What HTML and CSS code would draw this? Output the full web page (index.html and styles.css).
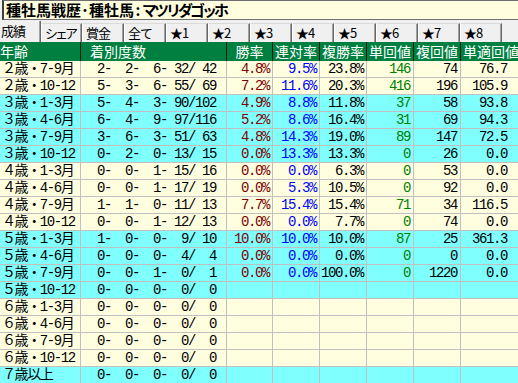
FILE: index.html
```html
<!DOCTYPE html>
<html lang="ja">
<head>
<meta charset="utf-8">
<link rel="stylesheet" href="styles.css">
</head>
<body>
<div class="title">種牡馬戦歴<span class="dot">･</span>種牡馬<span class="dot">:</span><span class="kana">マツリダゴッホ</span></div>
<div class="tabs">
  <span class="tab active w41">成績</span>
  <span class="tab w41 narrow">シェア</span>
  <span class="tab">賞金</span>
  <span class="tab">全て</span>
  <span class="tab">★1</span>
  <span class="tab">★2</span>
  <span class="tab">★3</span>
  <span class="tab">★4</span>
  <span class="tab">★5</span>
  <span class="tab">★6</span>
  <span class="tab">★7</span>
  <span class="tab">★8</span>
</div>
<div class="grid">
  <div class="row head">
    <div class="h left">年齢</div><div class="h deg">着別度数</div><div class="h">勝率</div><div class="h">連対率</div><div class="h">複勝率</div><div class="h">単回値</div><div class="h">複回値</div><div class="h last">単適回値</div>
  </div>
  <div class="row y"><div class="c lab">２歳・7-9月</div><div class="c deg">2-  2-  6- 32/ 42</div><div class="c r1">4.8%</div><div class="c r2">9.5%</div><div class="c">23.8%</div><div class="c g">146</div><div class="c">74</div><div class="c last">76.7</div></div>
  <div class="row y"><div class="c lab">２歳・10-12</div><div class="c deg">5-  3-  6- 55/ 69</div><div class="c r1">7.2%</div><div class="c r2">11.6%</div><div class="c">20.3%</div><div class="c g">416</div><div class="c">196</div><div class="c last">105.9</div></div>
  <div class="row cy"><div class="c lab">３歳・1-3月</div><div class="c deg">5-  4-  3- 90/102</div><div class="c r1">4.9%</div><div class="c r2">8.8%</div><div class="c">11.8%</div><div class="c g">37</div><div class="c">58</div><div class="c last">93.8</div></div>
  <div class="row cy"><div class="c lab">３歳・4-6月</div><div class="c deg">6-  4-  9- 97/116</div><div class="c r1">5.2%</div><div class="c r2">8.6%</div><div class="c">16.4%</div><div class="c g">31</div><div class="c">69</div><div class="c last">94.3</div></div>
  <div class="row cy"><div class="c lab">３歳・7-9月</div><div class="c deg">3-  6-  3- 51/ 63</div><div class="c r1">4.8%</div><div class="c r2">14.3%</div><div class="c">19.0%</div><div class="c g">89</div><div class="c">147</div><div class="c last">72.5</div></div>
  <div class="row cy"><div class="c lab">３歳・10-12</div><div class="c deg">0-  2-  0- 13/ 15</div><div class="c r1">0.0%</div><div class="c r2">13.3%</div><div class="c">13.3%</div><div class="c g">0</div><div class="c">26</div><div class="c last">0.0</div></div>
  <div class="row y"><div class="c lab">４歳・1-3月</div><div class="c deg">0-  0-  1- 15/ 16</div><div class="c r1">0.0%</div><div class="c r2">0.0%</div><div class="c">6.3%</div><div class="c g">0</div><div class="c">53</div><div class="c last">0.0</div></div>
  <div class="row y"><div class="c lab">４歳・4-6月</div><div class="c deg">0-  0-  1- 17/ 19</div><div class="c r1">0.0%</div><div class="c r2">5.3%</div><div class="c">10.5%</div><div class="c g">0</div><div class="c">92</div><div class="c last">0.0</div></div>
  <div class="row y"><div class="c lab">４歳・7-9月</div><div class="c deg">1-  1-  0- 11/ 13</div><div class="c r1">7.7%</div><div class="c r2">15.4%</div><div class="c">15.4%</div><div class="c g">71</div><div class="c">34</div><div class="c last">116.5</div></div>
  <div class="row y"><div class="c lab">４歳・10-12</div><div class="c deg">0-  0-  1- 12/ 13</div><div class="c r1">0.0%</div><div class="c r2">0.0%</div><div class="c">7.7%</div><div class="c g">0</div><div class="c">74</div><div class="c last">0.0</div></div>
  <div class="row cy"><div class="c lab">５歳・1-3月</div><div class="c deg">1-  0-  0-  9/ 10</div><div class="c r1">10.0%</div><div class="c r2">10.0%</div><div class="c">10.0%</div><div class="c g">87</div><div class="c">25</div><div class="c last">361.3</div></div>
  <div class="row cy"><div class="c lab">５歳・4-6月</div><div class="c deg">0-  0-  0-  4/  4</div><div class="c r1">0.0%</div><div class="c r2">0.0%</div><div class="c">0.0%</div><div class="c g">0</div><div class="c">0</div><div class="c last">0.0</div></div>
  <div class="row cy"><div class="c lab">５歳・7-9月</div><div class="c deg">0-  0-  1-  0/  1</div><div class="c r1">0.0%</div><div class="c r2">0.0%</div><div class="c">100.0%</div><div class="c g">0</div><div class="c">1220</div><div class="c last">0.0</div></div>
  <div class="row cy"><div class="c lab">５歳・10-12</div><div class="c deg">0-  0-  0-  0/  0</div><div class="c"></div><div class="c"></div><div class="c"></div><div class="c"></div><div class="c"></div><div class="c last"></div></div>
  <div class="row y"><div class="c lab">６歳・1-3月</div><div class="c deg">0-  0-  0-  0/  0</div><div class="c"></div><div class="c"></div><div class="c"></div><div class="c"></div><div class="c"></div><div class="c last"></div></div>
  <div class="row y"><div class="c lab">６歳・4-6月</div><div class="c deg">0-  0-  0-  0/  0</div><div class="c"></div><div class="c"></div><div class="c"></div><div class="c"></div><div class="c"></div><div class="c last"></div></div>
  <div class="row y"><div class="c lab">６歳・7-9月</div><div class="c deg">0-  0-  0-  0/  0</div><div class="c"></div><div class="c"></div><div class="c"></div><div class="c"></div><div class="c"></div><div class="c last"></div></div>
  <div class="row y"><div class="c lab">６歳・10-12</div><div class="c deg">0-  0-  0-  0/  0</div><div class="c"></div><div class="c"></div><div class="c"></div><div class="c"></div><div class="c"></div><div class="c last"></div></div>
  <div class="row cy"><div class="c lab">７歳以上</div><div class="c deg">0-  0-  0-  0/  0</div><div class="c"></div><div class="c"></div><div class="c"></div><div class="c"></div><div class="c"></div><div class="c last"></div></div>
</div>
</body>
</html>
```

FILE: styles.css
```css
html, body {
  margin: 0;
  padding: 0;
  background: #f0f0f0;
  overflow: hidden;
}
body {
  width: 518px;
  height: 383px;
  font-family: "Noto Sans CJK JP", sans-serif;
}
.title {
  margin-left: 2px;
  height: 18px;
  border-top: 1px solid #6e6e6e;
  border-left: 2px solid #404040;
  border-bottom: 1px solid #707070;
  background: #ffffe0;
  font-weight: bold;
  font-size: 15px;
  line-height: 18px;
  padding-left: 2px;
  color: #000;
  white-space: nowrap;
}
.dot {
  display: inline-block;
  width: 8px;
  text-align: center;
}
.kana {
  letter-spacing: -3px;
}
.tabs {
  height: 22px;
  display: flex;
  align-items: flex-end;
  background: #f0f0f0;
}
.tab {
  box-sizing: border-box;
  width: 42px;
  height: 19px;
  border-top: 1px solid #dadada;
  border-left: 1px solid #ffffff;
  border-right: 1px solid #696969;
  box-shadow: inset -1px 0 #a0a0a0;
  background: #f0f0f0;
  font-size: 13px;
  letter-spacing: -1px;
  line-height: 17px;
  padding-left: 3px;
  white-space: nowrap;
  overflow: hidden;
  color: #000;
}
.tab.w41 {
  width: 41px;
}
.tab.narrow {
  letter-spacing: -3px;
}
.tab.active {
  height: 21px;
  border-top: none;
  border-left: none;
  padding-left: 1px;
  line-height: 20px;
}
.grid {
  display: flex;
  flex-direction: column;
}
.row {
  display: grid;
  grid-template-columns: 81px 146px 46px 47px 47px 47px 47px 1fr;
  height: 17px;
}
.row.head {
  height: 19px;
  background: #008040;
}
.h {
  box-sizing: border-box;
  color: #fff;
  font-size: 14px;
  line-height: 18px;
  text-align: center;
  white-space: nowrap;
  overflow: hidden;
  border-right: 1px solid #0c1a10;
  box-shadow: -1px 0 #0c1a10;
}
.h.left {
  text-align: left;
  box-shadow: none;
}
.h.deg {
  text-align: left;
  padding-left: 9px;
}
.h.last {
  text-align: left;
  padding-left: 2px;
  border-right: none;
}
.row.y {
  background: #ffffe0;
}
.row.cy {
  background: #80ffff;
}
.c {
  box-sizing: border-box;
  height: 17px;
  border-right: 1px solid #c0c0c0;
  border-bottom: 1px solid #c0c0c0;
  font-family: "Liberation Mono", "Noto Sans CJK JP", monospace;
  font-size: 14px;
  letter-spacing: -1.4px;
  line-height: 16px;
  text-align: right;
  padding-right: 3px;
  white-space: pre;
  overflow: hidden;
  color: #000;
}
.c.lab {
  text-align: left;
  padding-left: 2px;
  padding-right: 0;
}
.c.deg {
  padding-right: 10px;
}
.c.last {
  border-right: none;
  padding-right: 11px;
}
.r1 {
  color: #800000;
}
.r2 {
  color: #0000ff;
}
.g {
  color: #008000;
}
```
